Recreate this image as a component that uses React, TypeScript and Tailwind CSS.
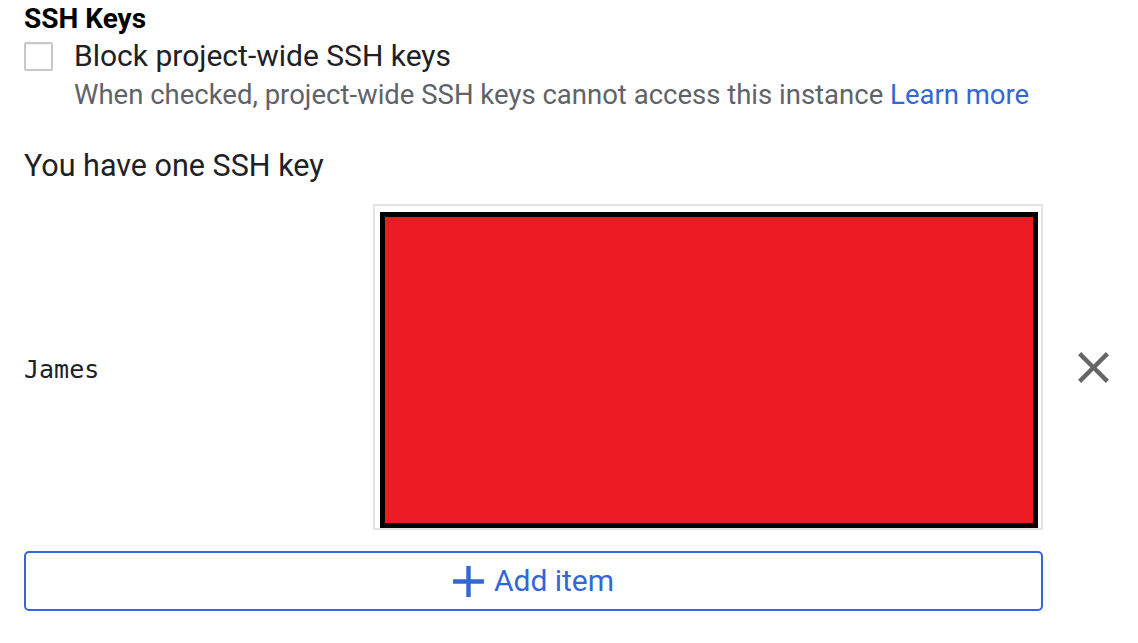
import React from 'react'

// Material "close" glyph
function CloseIcon() {
  return (
    <svg viewBox="0 0 24 24" className="w-[53px] h-[53px]" fill="#666666">
      <path d="M19 6.41L17.59 5 12 10.59 6.41 5 5 6.41 10.59 12 5 17.59 6.41 19 12 13.41 17.59 19 19 17.59 13.41 12z" />
    </svg>
  )
}

// Material "add" glyph
function AddIcon() {
  return (
    <svg viewBox="0 0 24 24" className="w-[53px] h-[53px] -mx-[11px]" fill="#3367d6">
      <path d="M19 13h-6v6h-2v-6H5v-2h6V5h2v6h6v2z" />
    </svg>
  )
}

export default function App() {
  return (
    <div
      className="w-[1138px] h-[643px] bg-white overflow-hidden pl-[24px] pt-[3px]"
      style={{ fontFamily: 'Roboto, "Liberation Sans", sans-serif' }}
    >
      <h2 className="text-[28px] leading-[32px] font-bold text-black">SSH Keys</h2>

      {/* Block project-wide keys */}
      <label className="flex items-center h-[36px] mt-[3px]">
        <span className="w-[29px] h-[29px] border-2 border-[#c8c8c8] rounded-[2px] shadow-[inset_0_1px_1px_rgba(0,0,0,0.06)] bg-white shrink-0" />
        <span className="ml-[21px] text-[30px] leading-[36px] text-[#202124]">
          Block project-wide SSH keys
        </span>
      </label>
      <p className="ml-[50px] mt-[5px] text-[27.5px] leading-[32px] text-[#5f6368]">
        When checked, project-wide SSH keys cannot access this instance{' '}
        <a className="text-[#3367d6]">Learn more</a>
      </p>

      <p className="mt-[37px] text-[30.5px] leading-[36px] text-[#202124]">You have one SSH key</p>

      {/* key row */}
      <div className="flex items-center mt-[20px]">
        <div
          className="w-[349px] pt-[6px] text-[25px] text-[#202124]"
          style={{ fontFamily: '"DejaVu Sans Mono", "Liberation Mono", monospace' }}
        >
          James
        </div>
        <div className="w-[670px] h-[326px] border-2 border-[#e3e3e3] pl-[5px] pt-[6px]">
          <div className="w-[658px] h-[316px] border-[5px] border-black bg-[#ed1c24]" />
        </div>
        <div className="ml-[24px]">
          <CloseIcon />
        </div>
      </div>

      <button className="mt-[21px] w-[1019px] h-[60px] border-2 border-[#3367d6] rounded-[5px] flex items-center justify-center gap-[10px] text-[#3367d6]">
        <AddIcon />
        <span className="text-[30px] leading-[36px]">Add item</span>
      </button>
    </div>
  )
}
